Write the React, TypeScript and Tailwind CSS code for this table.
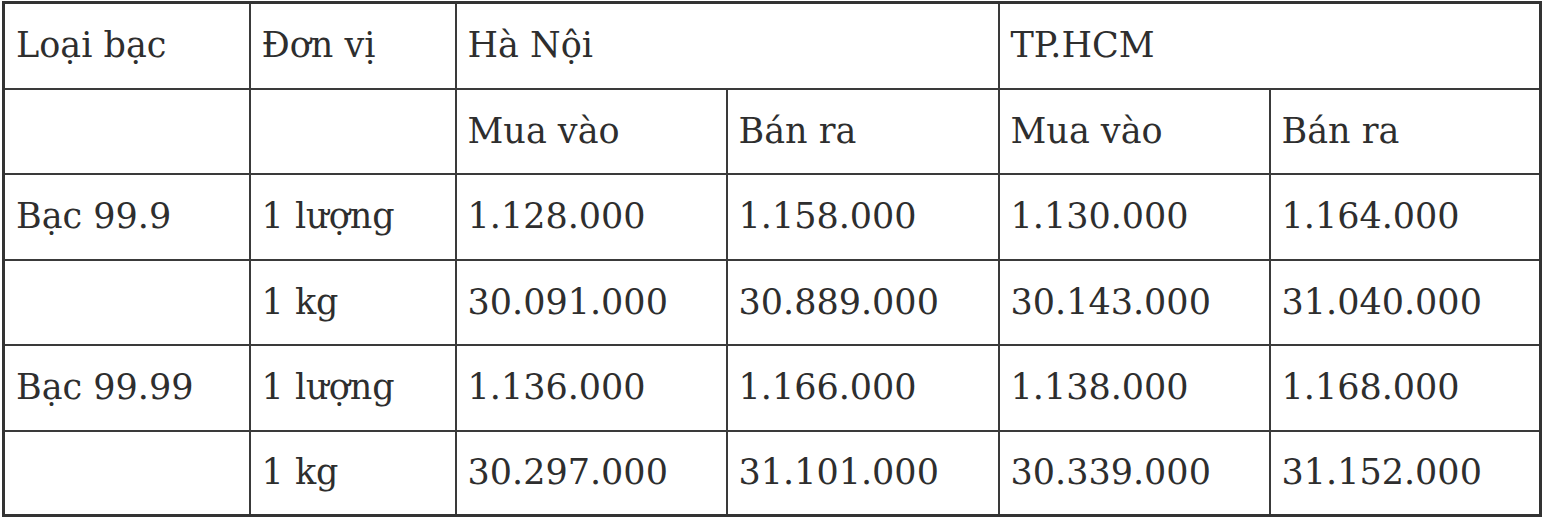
import React from 'react';

type Row = [string, string, string, string, string, string];

const rows: Row[] = [
  ['Bạc 99.9', '1 lượng', '1.128.000', '1.158.000', '1.130.000', '1.164.000'],
  ['', '1 kg', '30.091.000', '30.889.000', '30.143.000', '31.040.000'],
  ['Bạc 99.99', '1 lượng', '1.136.000', '1.166.000', '1.138.000', '1.168.000'],
  ['', '1 kg', '30.297.000', '31.101.000', '30.339.000', '31.152.000'],
];

const cell = 'border-2 border-[#3a3a3a] px-[11px] align-middle text-left font-normal';

export default function App() {
  return (
    <div className="w-[1546px] h-[520px] bg-white pt-[1px] pl-[2px]">
      <table
        className="w-[1540px] table-fixed border-collapse border-[3px] border-[#333] text-[35px] leading-none text-[#2e2e2e]"
        style={{ fontFamily: '"DejaVu Serif", "Liberation Serif", serif' }}
      >
        <colgroup>
          <col className="w-[246px]" />
          <col className="w-[206px]" />
          <col className="w-[271px]" />
          <col className="w-[272px]" />
          <col className="w-[271px]" />
          <col className="w-[271px]" />
        </colgroup>
        <thead>
          <tr className="h-[86px]">
            <th className={cell}>Loại bạc</th>
            <th className={cell}>Đơn vị</th>
            <th className={cell} colSpan={2}>Hà Nội</th>
            <th className={cell} colSpan={2}>TP.HCM</th>
          </tr>
          <tr className="h-[85px]">
            <th className={cell}></th>
            <th className={cell}></th>
            <th className={cell}>Mua vào</th>
            <th className={cell}>Bán ra</th>
            <th className={cell}>Mua vào</th>
            <th className={cell}>Bán ra</th>
          </tr>
        </thead>
        <tbody>
          {rows.map((row, i) => (
            <tr key={i} className={i % 2 === 0 ? 'h-[86px]' : 'h-[85px]'}>
              {row.map((value, j) => (
                <td key={j} className={cell}>
                  {value}
                </td>
              ))}
            </tr>
          ))}
        </tbody>
      </table>
    </div>
  );
}
